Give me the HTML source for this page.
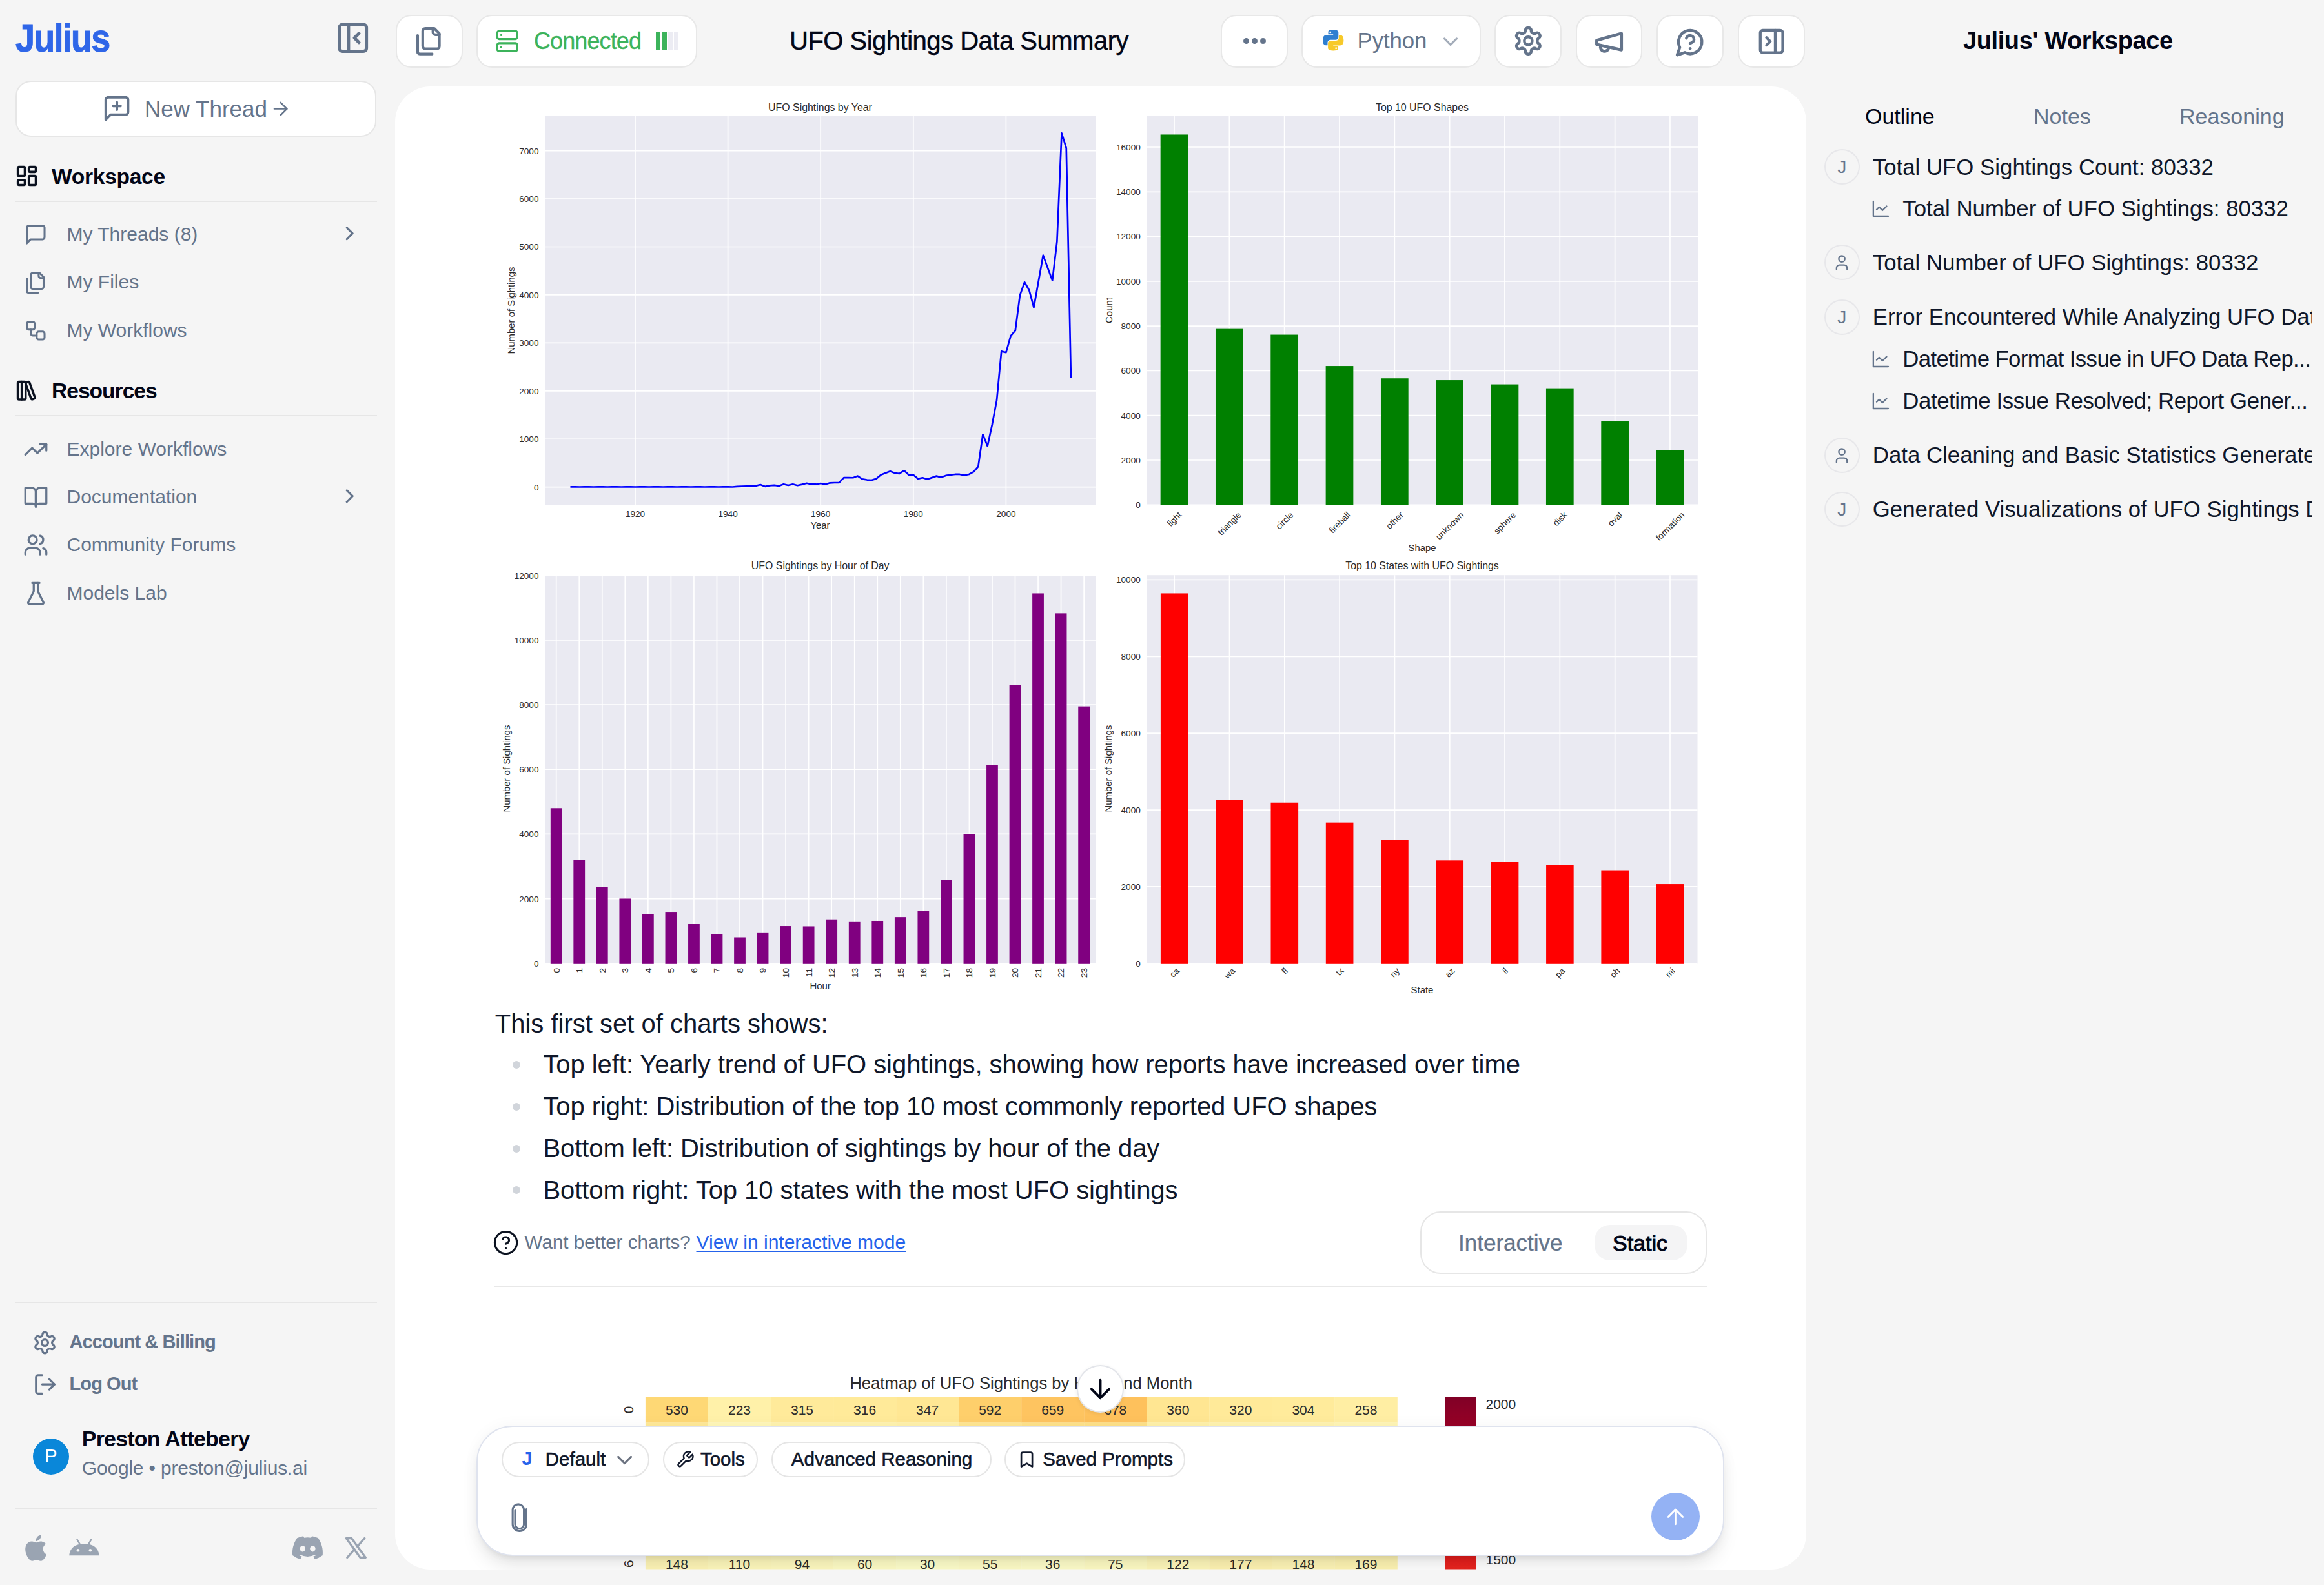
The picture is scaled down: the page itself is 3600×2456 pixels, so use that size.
<!DOCTYPE html><html><head><meta charset="utf-8"><style>
html,body{margin:0;padding:0;width:100%;height:100%;overflow:hidden;background:#f5f5f5}
#root{position:absolute;left:0;top:0;width:1800px;height:1228px;zoom:2;overflow:hidden;font-family:"Liberation Sans",sans-serif;background:#f5f5f5}
.t{position:absolute;white-space:nowrap}
.ic{position:absolute;overflow:visible}
.b{position:absolute;box-sizing:border-box}
@media (max-width:2400px){#root{zoom:1}}
</style></head><body><div id="root"><div class="b" style="left:306.00px;top:67.00px;width:1093.00px;height:1149.00px;background:#fff;border-radius:27.5px;"></div><svg style="position:absolute;left:0;top:0;width:1800px;height:1228px" viewBox="0 0 3600 2456" font-family="Liberation Sans, sans-serif"><defs><clipPath id="cardclip"><rect x="612" y="134" width="2186" height="2297.6" rx="55"/></clipPath></defs><g clip-path="url(#cardclip)"><rect x="844" y="179.2" width="853.50" height="602.80" fill="#eaeaf2"/><line x1="844" x2="1697.5" y1="754.70" y2="754.70" stroke="#fff" stroke-width="1.7"/><line x1="844" x2="1697.5" y1="680.26" y2="680.26" stroke="#fff" stroke-width="1.7"/><line x1="844" x2="1697.5" y1="605.81" y2="605.81" stroke="#fff" stroke-width="1.7"/><line x1="844" x2="1697.5" y1="531.37" y2="531.37" stroke="#fff" stroke-width="1.7"/><line x1="844" x2="1697.5" y1="456.93" y2="456.93" stroke="#fff" stroke-width="1.7"/><line x1="844" x2="1697.5" y1="382.49" y2="382.49" stroke="#fff" stroke-width="1.7"/><line x1="844" x2="1697.5" y1="308.04" y2="308.04" stroke="#fff" stroke-width="1.7"/><line x1="844" x2="1697.5" y1="233.60" y2="233.60" stroke="#fff" stroke-width="1.7"/><line x1="984.00" x2="984.00" y1="179.2" y2="782" stroke="#fff" stroke-width="1.7"/><line x1="1127.60" x2="1127.60" y1="179.2" y2="782" stroke="#fff" stroke-width="1.7"/><line x1="1271.20" x2="1271.20" y1="179.2" y2="782" stroke="#fff" stroke-width="1.7"/><line x1="1414.80" x2="1414.80" y1="179.2" y2="782" stroke="#fff" stroke-width="1.7"/><line x1="1558.40" x2="1558.40" y1="179.2" y2="782" stroke="#fff" stroke-width="1.7"/><text x="834.50" y="759.60" font-size="13.6" fill="#2b2b2b" text-anchor="end">0</text><text x="834.50" y="685.15" font-size="13.6" fill="#2b2b2b" text-anchor="end">1000</text><text x="834.50" y="610.71" font-size="13.6" fill="#2b2b2b" text-anchor="end">2000</text><text x="834.50" y="536.27" font-size="13.6" fill="#2b2b2b" text-anchor="end">3000</text><text x="834.50" y="461.82" font-size="13.6" fill="#2b2b2b" text-anchor="end">4000</text><text x="834.50" y="387.38" font-size="13.6" fill="#2b2b2b" text-anchor="end">5000</text><text x="834.50" y="312.94" font-size="13.6" fill="#2b2b2b" text-anchor="end">6000</text><text x="834.50" y="238.50" font-size="13.6" fill="#2b2b2b" text-anchor="end">7000</text><text x="984.00" y="800.80" font-size="13.6" fill="#2b2b2b" text-anchor="middle">1920</text><text x="1127.60" y="800.80" font-size="13.6" fill="#2b2b2b" text-anchor="middle">1940</text><text x="1271.20" y="800.80" font-size="13.6" fill="#2b2b2b" text-anchor="middle">1960</text><text x="1414.80" y="800.80" font-size="13.6" fill="#2b2b2b" text-anchor="middle">1980</text><text x="1558.40" y="800.80" font-size="13.6" fill="#2b2b2b" text-anchor="middle">2000</text><text x="1270.50" y="172.00" font-size="15.9" fill="#2b2b2b" text-anchor="middle">UFO Sightings by Year</text><text x="1270.50" y="819.00" font-size="14.9" fill="#2b2b2b" text-anchor="middle">Year</text><text x="796.86" y="481.00" font-size="14.9" fill="#2b2b2b" text-anchor="middle" transform="rotate(-90 796.86 481.00)">Number of Sightings</text><polyline points="883.48,754.40 890.66,754.33 897.84,754.48 905.02,754.40 912.20,754.33 919.38,754.48 926.56,754.40 933.74,754.33 940.92,754.48 948.10,754.40 955.28,754.33 962.46,754.48 969.64,754.40 976.82,754.33 984.00,754.48 991.18,754.40 998.36,754.33 1005.54,754.48 1012.72,754.40 1019.90,754.33 1027.08,754.48 1034.26,754.40 1041.44,754.33 1048.62,754.48 1055.80,754.40 1062.98,754.33 1070.16,754.48 1077.34,754.40 1084.52,754.33 1091.70,754.48 1098.88,754.40 1106.06,754.33 1113.24,754.48 1120.42,754.40 1127.60,754.33 1134.78,754.48 1141.96,753.96 1149.14,753.58 1156.32,753.36 1163.50,753.06 1170.68,752.91 1177.86,750.98 1185.04,753.81 1192.22,752.47 1199.40,751.95 1206.58,752.91 1213.76,750.23 1220.94,751.95 1228.12,750.23 1235.30,752.24 1242.48,750.61 1249.66,748.74 1256.84,750.46 1264.02,750.46 1271.20,748.97 1278.38,750.46 1285.56,748.30 1292.74,748.00 1299.92,747.85 1307.10,740.11 1314.28,740.11 1321.46,740.26 1328.64,737.58 1335.82,742.34 1343.00,743.53 1350.18,744.05 1357.36,741.90 1364.54,735.79 1371.72,733.11 1378.90,730.13 1386.08,733.11 1393.26,733.86 1400.44,729.02 1407.62,735.79 1414.80,735.79 1421.98,741.90 1429.16,740.26 1436.34,742.57 1443.52,740.11 1450.70,737.65 1457.88,739.59 1465.06,736.91 1472.24,735.79 1479.42,734.97 1486.60,734.97 1493.78,736.54 1500.96,734.97 1508.14,731.10 1515.32,722.84 1522.50,673.04 1529.68,691.20 1536.86,657.92 1544.04,620.11 1551.22,544.40 1558.40,546.26 1565.58,520.58 1572.76,512.24 1579.94,457.38 1587.12,437.28 1594.30,449.78 1601.48,476.28 1608.66,436.08 1615.84,395.66 1623.02,415.24 1630.20,434.60 1637.38,374.07 1644.56,206.35 1651.74,229.43 1658.92,585.94" fill="none" stroke="#0000ff" stroke-width="2.7" stroke-linejoin="round"/><rect x="1777" y="179" width="853.00" height="603.30" fill="#eaeaf2"/><line x1="1777" x2="2630" y1="782.30" y2="782.30" stroke="#fff" stroke-width="1.7"/><line x1="1777" x2="2630" y1="713.01" y2="713.01" stroke="#fff" stroke-width="1.7"/><line x1="1777" x2="2630" y1="643.72" y2="643.72" stroke="#fff" stroke-width="1.7"/><line x1="1777" x2="2630" y1="574.44" y2="574.44" stroke="#fff" stroke-width="1.7"/><line x1="1777" x2="2630" y1="505.15" y2="505.15" stroke="#fff" stroke-width="1.7"/><line x1="1777" x2="2630" y1="435.86" y2="435.86" stroke="#fff" stroke-width="1.7"/><line x1="1777" x2="2630" y1="366.58" y2="366.58" stroke="#fff" stroke-width="1.7"/><line x1="1777" x2="2630" y1="297.29" y2="297.29" stroke="#fff" stroke-width="1.7"/><line x1="1777" x2="2630" y1="228.00" y2="228.00" stroke="#fff" stroke-width="1.7"/><line x1="1819.00" x2="1819.00" y1="179" y2="782.3" stroke="#fff" stroke-width="1.7"/><line x1="1904.33" x2="1904.33" y1="179" y2="782.3" stroke="#fff" stroke-width="1.7"/><line x1="1989.66" x2="1989.66" y1="179" y2="782.3" stroke="#fff" stroke-width="1.7"/><line x1="2074.99" x2="2074.99" y1="179" y2="782.3" stroke="#fff" stroke-width="1.7"/><line x1="2160.32" x2="2160.32" y1="179" y2="782.3" stroke="#fff" stroke-width="1.7"/><line x1="2245.65" x2="2245.65" y1="179" y2="782.3" stroke="#fff" stroke-width="1.7"/><line x1="2330.98" x2="2330.98" y1="179" y2="782.3" stroke="#fff" stroke-width="1.7"/><line x1="2416.31" x2="2416.31" y1="179" y2="782.3" stroke="#fff" stroke-width="1.7"/><line x1="2501.64" x2="2501.64" y1="179" y2="782.3" stroke="#fff" stroke-width="1.7"/><line x1="2586.97" x2="2586.97" y1="179" y2="782.3" stroke="#fff" stroke-width="1.7"/><rect x="1797.65" y="208.46" width="42.7" height="573.84" fill="#008000"/><rect x="1882.98" y="509.65" width="42.7" height="272.65" fill="#008000"/><rect x="1968.31" y="518.56" width="42.7" height="263.74" fill="#008000"/><rect x="2053.64" y="567.06" width="42.7" height="215.24" fill="#008000"/><rect x="2138.97" y="586.22" width="42.7" height="196.08" fill="#008000"/><rect x="2224.30" y="589.06" width="42.7" height="193.24" fill="#008000"/><rect x="2309.63" y="595.57" width="42.7" height="186.73" fill="#008000"/><rect x="2394.96" y="601.63" width="42.7" height="180.67" fill="#008000"/><rect x="2480.29" y="653.01" width="42.7" height="129.29" fill="#008000"/><rect x="2565.62" y="697.32" width="42.7" height="84.98" fill="#008000"/><text x="1766.80" y="787.20" font-size="13.6" fill="#2b2b2b" text-anchor="end">0</text><text x="1766.80" y="717.91" font-size="13.6" fill="#2b2b2b" text-anchor="end">2000</text><text x="1766.80" y="648.62" font-size="13.6" fill="#2b2b2b" text-anchor="end">4000</text><text x="1766.80" y="579.33" font-size="13.6" fill="#2b2b2b" text-anchor="end">6000</text><text x="1766.80" y="510.05" font-size="13.6" fill="#2b2b2b" text-anchor="end">8000</text><text x="1766.80" y="440.76" font-size="13.6" fill="#2b2b2b" text-anchor="end">10000</text><text x="1766.80" y="371.47" font-size="13.6" fill="#2b2b2b" text-anchor="end">12000</text><text x="1766.80" y="302.18" font-size="13.6" fill="#2b2b2b" text-anchor="end">14000</text><text x="1766.80" y="232.90" font-size="13.6" fill="#2b2b2b" text-anchor="end">16000</text><text x="1819.00" y="809.04" font-size="13.6" fill="#2b2b2b" text-anchor="middle" transform="rotate(-45 1819.00 804.15)">light</text><text x="1904.33" y="815.99" font-size="13.6" fill="#2b2b2b" text-anchor="middle" transform="rotate(-45 1904.33 811.10)">triangle</text><text x="1989.66" y="811.44" font-size="13.6" fill="#2b2b2b" text-anchor="middle" transform="rotate(-45 1989.66 806.55)">circle</text><text x="2074.99" y="814.39" font-size="13.6" fill="#2b2b2b" text-anchor="middle" transform="rotate(-45 2074.99 809.49)">fireball</text><text x="2160.32" y="811.18" font-size="13.6" fill="#2b2b2b" text-anchor="middle" transform="rotate(-45 2160.32 806.29)">other</text><text x="2245.65" y="819.47" font-size="13.6" fill="#2b2b2b" text-anchor="middle" transform="rotate(-45 2245.65 814.58)">unknown</text><text x="2330.98" y="814.93" font-size="13.6" fill="#2b2b2b" text-anchor="middle" transform="rotate(-45 2330.98 810.03)">sphere</text><text x="2416.31" y="808.77" font-size="13.6" fill="#2b2b2b" text-anchor="middle" transform="rotate(-45 2416.31 803.88)">disk</text><text x="2501.64" y="809.04" font-size="13.6" fill="#2b2b2b" text-anchor="middle" transform="rotate(-45 2501.64 804.15)">oval</text><text x="2586.97" y="820.27" font-size="13.6" fill="#2b2b2b" text-anchor="middle" transform="rotate(-45 2586.97 815.37)">formation</text><text x="2203.00" y="172.00" font-size="15.9" fill="#2b2b2b" text-anchor="middle">Top 10 UFO Shapes</text><text x="2203.00" y="853.70" font-size="14.9" fill="#2b2b2b" text-anchor="middle">Shape</text><text x="1723.06" y="481.00" font-size="14.9" fill="#2b2b2b" text-anchor="middle" transform="rotate(-90 1723.06 481.00)">Count</text><rect x="844.2" y="891.2" width="853.40" height="601.60" fill="#eaeaf2"/><line x1="844.2" x2="1697.6" y1="1492.80" y2="1492.80" stroke="#fff" stroke-width="1.7"/><line x1="844.2" x2="1697.6" y1="1392.62" y2="1392.62" stroke="#fff" stroke-width="1.7"/><line x1="844.2" x2="1697.6" y1="1292.43" y2="1292.43" stroke="#fff" stroke-width="1.7"/><line x1="844.2" x2="1697.6" y1="1192.25" y2="1192.25" stroke="#fff" stroke-width="1.7"/><line x1="844.2" x2="1697.6" y1="1092.07" y2="1092.07" stroke="#fff" stroke-width="1.7"/><line x1="844.2" x2="1697.6" y1="991.88" y2="991.88" stroke="#fff" stroke-width="1.7"/><line x1="844.2" x2="1697.6" y1="891.70" y2="891.70" stroke="#fff" stroke-width="1.7"/><line x1="861.70" x2="861.70" y1="891.2" y2="1492.8" stroke="#fff" stroke-width="1.7"/><line x1="897.24" x2="897.24" y1="891.2" y2="1492.8" stroke="#fff" stroke-width="1.7"/><line x1="932.78" x2="932.78" y1="891.2" y2="1492.8" stroke="#fff" stroke-width="1.7"/><line x1="968.32" x2="968.32" y1="891.2" y2="1492.8" stroke="#fff" stroke-width="1.7"/><line x1="1003.86" x2="1003.86" y1="891.2" y2="1492.8" stroke="#fff" stroke-width="1.7"/><line x1="1039.40" x2="1039.40" y1="891.2" y2="1492.8" stroke="#fff" stroke-width="1.7"/><line x1="1074.94" x2="1074.94" y1="891.2" y2="1492.8" stroke="#fff" stroke-width="1.7"/><line x1="1110.48" x2="1110.48" y1="891.2" y2="1492.8" stroke="#fff" stroke-width="1.7"/><line x1="1146.02" x2="1146.02" y1="891.2" y2="1492.8" stroke="#fff" stroke-width="1.7"/><line x1="1181.56" x2="1181.56" y1="891.2" y2="1492.8" stroke="#fff" stroke-width="1.7"/><line x1="1217.10" x2="1217.10" y1="891.2" y2="1492.8" stroke="#fff" stroke-width="1.7"/><line x1="1252.64" x2="1252.64" y1="891.2" y2="1492.8" stroke="#fff" stroke-width="1.7"/><line x1="1288.18" x2="1288.18" y1="891.2" y2="1492.8" stroke="#fff" stroke-width="1.7"/><line x1="1323.72" x2="1323.72" y1="891.2" y2="1492.8" stroke="#fff" stroke-width="1.7"/><line x1="1359.26" x2="1359.26" y1="891.2" y2="1492.8" stroke="#fff" stroke-width="1.7"/><line x1="1394.80" x2="1394.80" y1="891.2" y2="1492.8" stroke="#fff" stroke-width="1.7"/><line x1="1430.34" x2="1430.34" y1="891.2" y2="1492.8" stroke="#fff" stroke-width="1.7"/><line x1="1465.88" x2="1465.88" y1="891.2" y2="1492.8" stroke="#fff" stroke-width="1.7"/><line x1="1501.42" x2="1501.42" y1="891.2" y2="1492.8" stroke="#fff" stroke-width="1.7"/><line x1="1536.96" x2="1536.96" y1="891.2" y2="1492.8" stroke="#fff" stroke-width="1.7"/><line x1="1572.50" x2="1572.50" y1="891.2" y2="1492.8" stroke="#fff" stroke-width="1.7"/><line x1="1608.04" x2="1608.04" y1="891.2" y2="1492.8" stroke="#fff" stroke-width="1.7"/><line x1="1643.58" x2="1643.58" y1="891.2" y2="1492.8" stroke="#fff" stroke-width="1.7"/><line x1="1679.12" x2="1679.12" y1="891.2" y2="1492.8" stroke="#fff" stroke-width="1.7"/><rect x="852.82" y="1252.26" width="17.77" height="240.54" fill="#800080"/><rect x="888.36" y="1332.46" width="17.77" height="160.34" fill="#800080"/><rect x="923.90" y="1374.98" width="17.77" height="117.82" fill="#800080"/><rect x="959.44" y="1392.47" width="17.77" height="100.33" fill="#800080"/><rect x="994.98" y="1416.66" width="17.77" height="76.14" fill="#800080"/><rect x="1030.52" y="1413.05" width="17.77" height="79.75" fill="#800080"/><rect x="1066.06" y="1431.44" width="17.77" height="61.36" fill="#800080"/><rect x="1101.60" y="1447.57" width="17.77" height="45.23" fill="#800080"/><rect x="1137.13" y="1452.48" width="17.77" height="40.32" fill="#800080"/><rect x="1172.67" y="1444.86" width="17.77" height="47.94" fill="#800080"/><rect x="1208.21" y="1435.04" width="17.77" height="57.76" fill="#800080"/><rect x="1243.76" y="1435.45" width="17.77" height="57.35" fill="#800080"/><rect x="1279.30" y="1424.73" width="17.77" height="68.07" fill="#800080"/><rect x="1314.84" y="1427.83" width="17.77" height="64.97" fill="#800080"/><rect x="1350.38" y="1426.98" width="17.77" height="65.82" fill="#800080"/><rect x="1385.92" y="1421.12" width="17.77" height="71.68" fill="#800080"/><rect x="1421.46" y="1411.75" width="17.77" height="81.05" fill="#800080"/><rect x="1457.00" y="1363.36" width="17.77" height="129.44" fill="#800080"/><rect x="1492.54" y="1292.58" width="17.77" height="200.22" fill="#800080"/><rect x="1528.08" y="1185.09" width="17.77" height="307.71" fill="#800080"/><rect x="1563.62" y="1061.01" width="17.77" height="431.79" fill="#800080"/><rect x="1599.15" y="919.45" width="17.77" height="573.35" fill="#800080"/><rect x="1634.69" y="950.36" width="17.77" height="542.44" fill="#800080"/><rect x="1670.23" y="1094.62" width="17.77" height="398.18" fill="#800080"/><text x="834.50" y="1497.70" font-size="13.6" fill="#2b2b2b" text-anchor="end">0</text><text x="834.50" y="1397.51" font-size="13.6" fill="#2b2b2b" text-anchor="end">2000</text><text x="834.50" y="1297.33" font-size="13.6" fill="#2b2b2b" text-anchor="end">4000</text><text x="834.50" y="1197.15" font-size="13.6" fill="#2b2b2b" text-anchor="end">6000</text><text x="834.50" y="1096.96" font-size="13.6" fill="#2b2b2b" text-anchor="end">8000</text><text x="834.50" y="996.78" font-size="13.6" fill="#2b2b2b" text-anchor="end">10000</text><text x="834.50" y="896.60" font-size="13.6" fill="#2b2b2b" text-anchor="end">12000</text><text x="861.70" y="1508.68" font-size="13.6" fill="#2b2b2b" text-anchor="middle" transform="rotate(-90 861.70 1503.78)">0</text><text x="897.24" y="1508.68" font-size="13.6" fill="#2b2b2b" text-anchor="middle" transform="rotate(-90 897.24 1503.78)">1</text><text x="932.78" y="1508.68" font-size="13.6" fill="#2b2b2b" text-anchor="middle" transform="rotate(-90 932.78 1503.78)">2</text><text x="968.32" y="1508.68" font-size="13.6" fill="#2b2b2b" text-anchor="middle" transform="rotate(-90 968.32 1503.78)">3</text><text x="1003.86" y="1508.68" font-size="13.6" fill="#2b2b2b" text-anchor="middle" transform="rotate(-90 1003.86 1503.78)">4</text><text x="1039.40" y="1508.68" font-size="13.6" fill="#2b2b2b" text-anchor="middle" transform="rotate(-90 1039.40 1503.78)">5</text><text x="1074.94" y="1508.68" font-size="13.6" fill="#2b2b2b" text-anchor="middle" transform="rotate(-90 1074.94 1503.78)">6</text><text x="1110.48" y="1508.68" font-size="13.6" fill="#2b2b2b" text-anchor="middle" transform="rotate(-90 1110.48 1503.78)">7</text><text x="1146.02" y="1508.68" font-size="13.6" fill="#2b2b2b" text-anchor="middle" transform="rotate(-90 1146.02 1503.78)">8</text><text x="1181.56" y="1508.68" font-size="13.6" fill="#2b2b2b" text-anchor="middle" transform="rotate(-90 1181.56 1503.78)">9</text><text x="1217.10" y="1512.46" font-size="13.6" fill="#2b2b2b" text-anchor="middle" transform="rotate(-90 1217.10 1507.56)">10</text><text x="1252.64" y="1511.96" font-size="13.6" fill="#2b2b2b" text-anchor="middle" transform="rotate(-90 1252.64 1507.06)">11</text><text x="1288.18" y="1512.46" font-size="13.6" fill="#2b2b2b" text-anchor="middle" transform="rotate(-90 1288.18 1507.56)">12</text><text x="1323.72" y="1512.46" font-size="13.6" fill="#2b2b2b" text-anchor="middle" transform="rotate(-90 1323.72 1507.56)">13</text><text x="1359.26" y="1512.46" font-size="13.6" fill="#2b2b2b" text-anchor="middle" transform="rotate(-90 1359.26 1507.56)">14</text><text x="1394.80" y="1512.46" font-size="13.6" fill="#2b2b2b" text-anchor="middle" transform="rotate(-90 1394.80 1507.56)">15</text><text x="1430.34" y="1512.46" font-size="13.6" fill="#2b2b2b" text-anchor="middle" transform="rotate(-90 1430.34 1507.56)">16</text><text x="1465.88" y="1512.46" font-size="13.6" fill="#2b2b2b" text-anchor="middle" transform="rotate(-90 1465.88 1507.56)">17</text><text x="1501.42" y="1512.46" font-size="13.6" fill="#2b2b2b" text-anchor="middle" transform="rotate(-90 1501.42 1507.56)">18</text><text x="1536.96" y="1512.46" font-size="13.6" fill="#2b2b2b" text-anchor="middle" transform="rotate(-90 1536.96 1507.56)">19</text><text x="1572.50" y="1512.46" font-size="13.6" fill="#2b2b2b" text-anchor="middle" transform="rotate(-90 1572.50 1507.56)">20</text><text x="1608.04" y="1512.46" font-size="13.6" fill="#2b2b2b" text-anchor="middle" transform="rotate(-90 1608.04 1507.56)">21</text><text x="1643.58" y="1512.46" font-size="13.6" fill="#2b2b2b" text-anchor="middle" transform="rotate(-90 1643.58 1507.56)">22</text><text x="1679.12" y="1512.46" font-size="13.6" fill="#2b2b2b" text-anchor="middle" transform="rotate(-90 1679.12 1507.56)">23</text><text x="1270.70" y="882.30" font-size="15.9" fill="#2b2b2b" text-anchor="middle">UFO Sightings by Hour of Day</text><text x="1270.70" y="1533.00" font-size="14.9" fill="#2b2b2b" text-anchor="middle">Hour</text><text x="789.96" y="1191.00" font-size="14.9" fill="#2b2b2b" text-anchor="middle" transform="rotate(-90 789.96 1191.00)">Number of Sightings</text><rect x="1776.2" y="891.2" width="853.30" height="601.60" fill="#eaeaf2"/><line x1="1776.2" x2="2629.5" y1="1492.80" y2="1492.80" stroke="#fff" stroke-width="1.7"/><line x1="1776.2" x2="2629.5" y1="1373.92" y2="1373.92" stroke="#fff" stroke-width="1.7"/><line x1="1776.2" x2="2629.5" y1="1255.04" y2="1255.04" stroke="#fff" stroke-width="1.7"/><line x1="1776.2" x2="2629.5" y1="1136.16" y2="1136.16" stroke="#fff" stroke-width="1.7"/><line x1="1776.2" x2="2629.5" y1="1017.28" y2="1017.28" stroke="#fff" stroke-width="1.7"/><line x1="1776.2" x2="2629.5" y1="898.40" y2="898.40" stroke="#fff" stroke-width="1.7"/><line x1="1819.20" x2="1819.20" y1="891.2" y2="1492.8" stroke="#fff" stroke-width="1.7"/><line x1="1904.51" x2="1904.51" y1="891.2" y2="1492.8" stroke="#fff" stroke-width="1.7"/><line x1="1989.82" x2="1989.82" y1="891.2" y2="1492.8" stroke="#fff" stroke-width="1.7"/><line x1="2075.13" x2="2075.13" y1="891.2" y2="1492.8" stroke="#fff" stroke-width="1.7"/><line x1="2160.44" x2="2160.44" y1="891.2" y2="1492.8" stroke="#fff" stroke-width="1.7"/><line x1="2245.75" x2="2245.75" y1="891.2" y2="1492.8" stroke="#fff" stroke-width="1.7"/><line x1="2331.06" x2="2331.06" y1="891.2" y2="1492.8" stroke="#fff" stroke-width="1.7"/><line x1="2416.37" x2="2416.37" y1="891.2" y2="1492.8" stroke="#fff" stroke-width="1.7"/><line x1="2501.68" x2="2501.68" y1="891.2" y2="1492.8" stroke="#fff" stroke-width="1.7"/><line x1="2586.99" x2="2586.99" y1="891.2" y2="1492.8" stroke="#fff" stroke-width="1.7"/><rect x="1797.90" y="919.44" width="42.6" height="573.36" fill="#ff0000"/><rect x="1883.21" y="1239.70" width="42.6" height="253.10" fill="#ff0000"/><rect x="1968.52" y="1243.75" width="42.6" height="249.05" fill="#ff0000"/><rect x="2053.83" y="1274.66" width="42.6" height="218.14" fill="#ff0000"/><rect x="2139.14" y="1302.00" width="42.6" height="190.80" fill="#ff0000"/><rect x="2224.45" y="1333.32" width="42.6" height="159.48" fill="#ff0000"/><rect x="2309.76" y="1336.00" width="42.6" height="156.80" fill="#ff0000"/><rect x="2395.07" y="1340.04" width="42.6" height="152.76" fill="#ff0000"/><rect x="2480.38" y="1348.54" width="42.6" height="144.26" fill="#ff0000"/><rect x="2565.69" y="1370.06" width="42.6" height="122.74" fill="#ff0000"/><text x="1766.80" y="1497.70" font-size="13.6" fill="#2b2b2b" text-anchor="end">0</text><text x="1766.80" y="1378.82" font-size="13.6" fill="#2b2b2b" text-anchor="end">2000</text><text x="1766.80" y="1259.94" font-size="13.6" fill="#2b2b2b" text-anchor="end">4000</text><text x="1766.80" y="1141.06" font-size="13.6" fill="#2b2b2b" text-anchor="end">6000</text><text x="1766.80" y="1022.18" font-size="13.6" fill="#2b2b2b" text-anchor="end">8000</text><text x="1766.80" y="903.30" font-size="13.6" fill="#2b2b2b" text-anchor="end">10000</text><text x="1819.20" y="1511.80" font-size="13.6" fill="#2b2b2b" text-anchor="middle" transform="rotate(-45 1819.20 1506.91)">ca</text><text x="1904.51" y="1512.87" font-size="13.6" fill="#2b2b2b" text-anchor="middle" transform="rotate(-45 1904.51 1507.97)">wa</text><text x="1989.82" y="1509.13" font-size="13.6" fill="#2b2b2b" text-anchor="middle" transform="rotate(-45 1989.82 1504.23)">fl</text><text x="2075.13" y="1510.46" font-size="13.6" fill="#2b2b2b" text-anchor="middle" transform="rotate(-45 2075.13 1505.57)">tx</text><text x="2160.44" y="1511.80" font-size="13.6" fill="#2b2b2b" text-anchor="middle" transform="rotate(-45 2160.44 1506.91)">ny</text><text x="2245.75" y="1511.80" font-size="13.6" fill="#2b2b2b" text-anchor="middle" transform="rotate(-45 2245.75 1506.91)">az</text><text x="2331.06" y="1508.86" font-size="13.6" fill="#2b2b2b" text-anchor="middle" transform="rotate(-45 2331.06 1503.96)">il</text><text x="2416.37" y="1512.07" font-size="13.6" fill="#2b2b2b" text-anchor="middle" transform="rotate(-45 2416.37 1507.18)">pa</text><text x="2501.68" y="1512.07" font-size="13.6" fill="#2b2b2b" text-anchor="middle" transform="rotate(-45 2501.68 1507.18)">oh</text><text x="2586.99" y="1511.80" font-size="13.6" fill="#2b2b2b" text-anchor="middle" transform="rotate(-45 2586.99 1506.90)">mi</text><text x="2203.00" y="882.30" font-size="15.9" fill="#2b2b2b" text-anchor="middle">Top 10 States with UFO Sightings</text><text x="2203.00" y="1539.00" font-size="14.9" fill="#2b2b2b" text-anchor="middle">State</text><text x="1722.36" y="1191.00" font-size="14.9" fill="#2b2b2b" text-anchor="middle" transform="rotate(-90 1722.36 1191.00)">Number of Sightings</text><text x="1581.70" y="2151.60" font-size="25.6" fill="#2b2b2b" text-anchor="middle">Heatmap of UFO Sightings by Hour and Month</text><rect x="999.90" y="2164.50" width="97.35" height="40.10" fill="#fed875"/><text x="1048.42" y="2191.96" font-size="21" fill="#2b2b2b" text-anchor="middle">530</text><rect x="1096.95" y="2164.50" width="97.35" height="40.10" fill="#fff1a9"/><text x="1145.48" y="2191.96" font-size="21" fill="#2b2b2b" text-anchor="middle">223</text><rect x="1194.00" y="2164.50" width="97.35" height="40.10" fill="#ffea9a"/><text x="1242.53" y="2191.96" font-size="21" fill="#2b2b2b" text-anchor="middle">315</text><rect x="1291.05" y="2164.50" width="97.35" height="40.10" fill="#ffea99"/><text x="1339.58" y="2191.96" font-size="21" fill="#2b2b2b" text-anchor="middle">316</text><rect x="1388.10" y="2164.50" width="97.35" height="40.10" fill="#ffe794"/><text x="1436.62" y="2191.96" font-size="21" fill="#2b2b2b" text-anchor="middle">347</text><rect x="1485.15" y="2164.50" width="97.35" height="40.10" fill="#fecf6b"/><text x="1533.68" y="2191.96" font-size="21" fill="#2b2b2b" text-anchor="middle">592</text><rect x="1582.20" y="2164.50" width="97.35" height="40.10" fill="#fec460"/><text x="1630.72" y="2191.96" font-size="21" fill="#2b2b2b" text-anchor="middle">659</text><rect x="1679.25" y="2164.50" width="97.35" height="40.10" fill="#fec15c"/><text x="1727.78" y="2191.96" font-size="21" fill="#2b2b2b" text-anchor="middle">678</text><rect x="1776.30" y="2164.50" width="97.35" height="40.10" fill="#ffe692"/><text x="1824.83" y="2191.96" font-size="21" fill="#2b2b2b" text-anchor="middle">360</text><rect x="1873.35" y="2164.50" width="97.35" height="40.10" fill="#ffea99"/><text x="1921.88" y="2191.96" font-size="21" fill="#2b2b2b" text-anchor="middle">320</text><rect x="1970.40" y="2164.50" width="97.35" height="40.10" fill="#ffeb9b"/><text x="2018.93" y="2191.96" font-size="21" fill="#2b2b2b" text-anchor="middle">304</text><rect x="2067.45" y="2164.50" width="97.35" height="40.10" fill="#ffeea3"/><text x="2115.97" y="2191.96" font-size="21" fill="#2b2b2b" text-anchor="middle">258</text><text x="980.56" y="2184.40" font-size="21" fill="#2b2b2b" text-anchor="middle" transform="rotate(-90 980.56 2184.40)">0</text><rect x="999.90" y="2204.30" width="97.35" height="40.10" fill="#ffe997"/><text x="1048.42" y="2231.76" font-size="21" fill="#2b2b2b" text-anchor="middle">329</text><rect x="1096.95" y="2204.30" width="97.35" height="40.10" fill="#fff7b8"/><text x="1145.48" y="2231.76" font-size="21" fill="#2b2b2b" text-anchor="middle">138</text><rect x="1194.00" y="2204.30" width="97.35" height="40.10" fill="#fff3ae"/><text x="1242.53" y="2231.76" font-size="21" fill="#2b2b2b" text-anchor="middle">195</text><rect x="1291.05" y="2204.30" width="97.35" height="40.10" fill="#fff3ae"/><text x="1339.58" y="2231.76" font-size="21" fill="#2b2b2b" text-anchor="middle">196</text><rect x="1388.10" y="2204.30" width="97.35" height="40.10" fill="#fff1ab"/><text x="1436.62" y="2231.76" font-size="21" fill="#2b2b2b" text-anchor="middle">215</text><rect x="1485.15" y="2204.30" width="97.35" height="40.10" fill="#ffe691"/><text x="1533.68" y="2231.76" font-size="21" fill="#2b2b2b" text-anchor="middle">367</text><rect x="1582.20" y="2204.30" width="97.35" height="40.10" fill="#fee28a"/><text x="1630.72" y="2231.76" font-size="21" fill="#2b2b2b" text-anchor="middle">409</text><rect x="1679.25" y="2204.30" width="97.35" height="40.10" fill="#fee188"/><text x="1727.78" y="2231.76" font-size="21" fill="#2b2b2b" text-anchor="middle">420</text><rect x="1776.30" y="2204.30" width="97.35" height="40.10" fill="#fff1a9"/><text x="1824.83" y="2231.76" font-size="21" fill="#2b2b2b" text-anchor="middle">223</text><rect x="1873.35" y="2204.30" width="97.35" height="40.10" fill="#fff3ae"/><text x="1921.88" y="2231.76" font-size="21" fill="#2b2b2b" text-anchor="middle">198</text><rect x="1970.40" y="2204.30" width="97.35" height="40.10" fill="#fff3b0"/><text x="2018.93" y="2231.76" font-size="21" fill="#2b2b2b" text-anchor="middle">188</text><rect x="2067.45" y="2204.30" width="97.35" height="40.10" fill="#fff5b5"/><text x="2115.97" y="2231.76" font-size="21" fill="#2b2b2b" text-anchor="middle">160</text><text x="980.56" y="2224.20" font-size="21" fill="#2b2b2b" text-anchor="middle" transform="rotate(-90 980.56 2224.20)">1</text><rect x="999.90" y="2244.10" width="97.35" height="40.10" fill="#fff0a7"/><text x="1048.42" y="2271.56" font-size="21" fill="#2b2b2b" text-anchor="middle">238</text><rect x="1096.95" y="2244.10" width="97.35" height="40.10" fill="#fffabf"/><text x="1145.48" y="2271.56" font-size="21" fill="#2b2b2b" text-anchor="middle">100</text><rect x="1194.00" y="2244.10" width="97.35" height="40.10" fill="#fff7b8"/><text x="1242.53" y="2271.56" font-size="21" fill="#2b2b2b" text-anchor="middle">142</text><rect x="1291.05" y="2244.10" width="97.35" height="40.10" fill="#fff7b8"/><text x="1339.58" y="2271.56" font-size="21" fill="#2b2b2b" text-anchor="middle">142</text><rect x="1388.10" y="2244.10" width="97.35" height="40.10" fill="#fff6b5"/><text x="1436.62" y="2271.56" font-size="21" fill="#2b2b2b" text-anchor="middle">156</text><rect x="1485.15" y="2244.10" width="97.35" height="40.10" fill="#ffeea2"/><text x="1533.68" y="2271.56" font-size="21" fill="#2b2b2b" text-anchor="middle">266</text><rect x="1582.20" y="2244.10" width="97.35" height="40.10" fill="#ffeb9d"/><text x="1630.72" y="2271.56" font-size="21" fill="#2b2b2b" text-anchor="middle">297</text><rect x="1679.25" y="2244.10" width="97.35" height="40.10" fill="#ffeb9b"/><text x="1727.78" y="2271.56" font-size="21" fill="#2b2b2b" text-anchor="middle">305</text><rect x="1776.30" y="2244.10" width="97.35" height="40.10" fill="#fff5b4"/><text x="1824.83" y="2271.56" font-size="21" fill="#2b2b2b" text-anchor="middle">162</text><rect x="1873.35" y="2244.10" width="97.35" height="40.10" fill="#fff7b7"/><text x="1921.88" y="2271.56" font-size="21" fill="#2b2b2b" text-anchor="middle">144</text><rect x="1970.40" y="2244.10" width="97.35" height="40.10" fill="#fff7b9"/><text x="2018.93" y="2271.56" font-size="21" fill="#2b2b2b" text-anchor="middle">137</text><rect x="2067.45" y="2244.10" width="97.35" height="40.10" fill="#fff9bc"/><text x="2115.97" y="2271.56" font-size="21" fill="#2b2b2b" text-anchor="middle">116</text><text x="980.56" y="2264.00" font-size="21" fill="#2b2b2b" text-anchor="middle" transform="rotate(-90 980.56 2264.00)">2</text><rect x="999.90" y="2283.90" width="97.35" height="40.10" fill="#fff2ad"/><text x="1048.42" y="2311.36" font-size="21" fill="#2b2b2b" text-anchor="middle">201</text><rect x="1096.95" y="2283.90" width="97.35" height="40.10" fill="#fffbc2"/><text x="1145.48" y="2311.36" font-size="21" fill="#2b2b2b" text-anchor="middle">85</text><rect x="1194.00" y="2283.90" width="97.35" height="40.10" fill="#fff8bc"/><text x="1242.53" y="2311.36" font-size="21" fill="#2b2b2b" text-anchor="middle">120</text><rect x="1291.05" y="2283.90" width="97.35" height="40.10" fill="#fff8bc"/><text x="1339.58" y="2311.36" font-size="21" fill="#2b2b2b" text-anchor="middle">120</text><rect x="1388.10" y="2283.90" width="97.35" height="40.10" fill="#fff7b9"/><text x="1436.62" y="2311.36" font-size="21" fill="#2b2b2b" text-anchor="middle">132</text><rect x="1485.15" y="2283.90" width="97.35" height="40.10" fill="#fff1a9"/><text x="1533.68" y="2311.36" font-size="21" fill="#2b2b2b" text-anchor="middle">225</text><rect x="1582.20" y="2283.90" width="97.35" height="40.10" fill="#ffefa5"/><text x="1630.72" y="2311.36" font-size="21" fill="#2b2b2b" text-anchor="middle">250</text><rect x="1679.25" y="2283.90" width="97.35" height="40.10" fill="#ffeea3"/><text x="1727.78" y="2311.36" font-size="21" fill="#2b2b2b" text-anchor="middle">258</text><rect x="1776.30" y="2283.90" width="97.35" height="40.10" fill="#fff7b9"/><text x="1824.83" y="2311.36" font-size="21" fill="#2b2b2b" text-anchor="middle">137</text><rect x="1873.35" y="2283.90" width="97.35" height="40.10" fill="#fff8bb"/><text x="1921.88" y="2311.36" font-size="21" fill="#2b2b2b" text-anchor="middle">122</text><rect x="1970.40" y="2283.90" width="97.35" height="40.10" fill="#fff9bc"/><text x="2018.93" y="2311.36" font-size="21" fill="#2b2b2b" text-anchor="middle">116</text><rect x="2067.45" y="2283.90" width="97.35" height="40.10" fill="#fffabf"/><text x="2115.97" y="2311.36" font-size="21" fill="#2b2b2b" text-anchor="middle">98</text><text x="980.56" y="2303.80" font-size="21" fill="#2b2b2b" text-anchor="middle" transform="rotate(-90 980.56 2303.80)">3</text><rect x="999.90" y="2323.70" width="97.35" height="40.10" fill="#fff5b5"/><text x="1048.42" y="2351.16" font-size="21" fill="#2b2b2b" text-anchor="middle">159</text><rect x="1096.95" y="2323.70" width="97.35" height="40.10" fill="#fffcc5"/><text x="1145.48" y="2351.16" font-size="21" fill="#2b2b2b" text-anchor="middle">67</text><rect x="1194.00" y="2323.70" width="97.35" height="40.10" fill="#fffac0"/><text x="1242.53" y="2351.16" font-size="21" fill="#2b2b2b" text-anchor="middle">94</text><rect x="1291.05" y="2323.70" width="97.35" height="40.10" fill="#fffac0"/><text x="1339.58" y="2351.16" font-size="21" fill="#2b2b2b" text-anchor="middle">95</text><rect x="1388.10" y="2323.70" width="97.35" height="40.10" fill="#fff9be"/><text x="1436.62" y="2351.16" font-size="21" fill="#2b2b2b" text-anchor="middle">104</text><rect x="1485.15" y="2323.70" width="97.35" height="40.10" fill="#fff4b1"/><text x="1533.68" y="2351.16" font-size="21" fill="#2b2b2b" text-anchor="middle">178</text><rect x="1582.20" y="2323.70" width="97.35" height="40.10" fill="#fff3ae"/><text x="1630.72" y="2351.16" font-size="21" fill="#2b2b2b" text-anchor="middle">198</text><rect x="1679.25" y="2323.70" width="97.35" height="40.10" fill="#fff2ad"/><text x="1727.78" y="2351.16" font-size="21" fill="#2b2b2b" text-anchor="middle">203</text><rect x="1776.30" y="2323.70" width="97.35" height="40.10" fill="#fff9be"/><text x="1824.83" y="2351.16" font-size="21" fill="#2b2b2b" text-anchor="middle">108</text><rect x="1873.35" y="2323.70" width="97.35" height="40.10" fill="#fffac0"/><text x="1921.88" y="2351.16" font-size="21" fill="#2b2b2b" text-anchor="middle">96</text><rect x="1970.40" y="2323.70" width="97.35" height="40.10" fill="#fffac1"/><text x="2018.93" y="2351.16" font-size="21" fill="#2b2b2b" text-anchor="middle">91</text><rect x="2067.45" y="2323.70" width="97.35" height="40.10" fill="#fffbc3"/><text x="2115.97" y="2351.16" font-size="21" fill="#2b2b2b" text-anchor="middle">77</text><text x="980.56" y="2343.60" font-size="21" fill="#2b2b2b" text-anchor="middle" transform="rotate(-90 980.56 2343.60)">4</text><rect x="999.90" y="2363.50" width="97.35" height="40.10" fill="#fff5b5"/><text x="1048.42" y="2390.96" font-size="21" fill="#2b2b2b" text-anchor="middle">159</text><rect x="1096.95" y="2363.50" width="97.35" height="40.10" fill="#fffcc5"/><text x="1145.48" y="2390.96" font-size="21" fill="#2b2b2b" text-anchor="middle">67</text><rect x="1194.00" y="2363.50" width="97.35" height="40.10" fill="#fffac0"/><text x="1242.53" y="2390.96" font-size="21" fill="#2b2b2b" text-anchor="middle">94</text><rect x="1291.05" y="2363.50" width="97.35" height="40.10" fill="#fffac0"/><text x="1339.58" y="2390.96" font-size="21" fill="#2b2b2b" text-anchor="middle">95</text><rect x="1388.10" y="2363.50" width="97.35" height="40.10" fill="#fff9be"/><text x="1436.62" y="2390.96" font-size="21" fill="#2b2b2b" text-anchor="middle">104</text><rect x="1485.15" y="2363.50" width="97.35" height="40.10" fill="#fff4b1"/><text x="1533.68" y="2390.96" font-size="21" fill="#2b2b2b" text-anchor="middle">178</text><rect x="1582.20" y="2363.50" width="97.35" height="40.10" fill="#fff3ae"/><text x="1630.72" y="2390.96" font-size="21" fill="#2b2b2b" text-anchor="middle">198</text><rect x="1679.25" y="2363.50" width="97.35" height="40.10" fill="#fff2ad"/><text x="1727.78" y="2390.96" font-size="21" fill="#2b2b2b" text-anchor="middle">203</text><rect x="1776.30" y="2363.50" width="97.35" height="40.10" fill="#fff9be"/><text x="1824.83" y="2390.96" font-size="21" fill="#2b2b2b" text-anchor="middle">108</text><rect x="1873.35" y="2363.50" width="97.35" height="40.10" fill="#fffac0"/><text x="1921.88" y="2390.96" font-size="21" fill="#2b2b2b" text-anchor="middle">96</text><rect x="1970.40" y="2363.50" width="97.35" height="40.10" fill="#fffac1"/><text x="2018.93" y="2390.96" font-size="21" fill="#2b2b2b" text-anchor="middle">91</text><rect x="2067.45" y="2363.50" width="97.35" height="40.10" fill="#fffbc3"/><text x="2115.97" y="2390.96" font-size="21" fill="#2b2b2b" text-anchor="middle">77</text><text x="980.56" y="2383.40" font-size="21" fill="#2b2b2b" text-anchor="middle" transform="rotate(-90 980.56 2383.40)">5</text><rect x="999.90" y="2403.30" width="97.35" height="40.10" fill="#fff6b7"/><text x="1048.42" y="2430.76" font-size="21" fill="#2b2b2b" text-anchor="middle">148</text><rect x="1096.95" y="2403.30" width="97.35" height="40.10" fill="#fff9bd"/><text x="1145.48" y="2430.76" font-size="21" fill="#2b2b2b" text-anchor="middle">110</text><rect x="1194.00" y="2403.30" width="97.35" height="40.10" fill="#fffac0"/><text x="1242.53" y="2430.76" font-size="21" fill="#2b2b2b" text-anchor="middle">94</text><rect x="1291.05" y="2403.30" width="97.35" height="40.10" fill="#fffdc6"/><text x="1339.58" y="2430.76" font-size="21" fill="#2b2b2b" text-anchor="middle">60</text><rect x="1388.10" y="2403.30" width="97.35" height="40.10" fill="#ffffcb"/><text x="1436.62" y="2430.76" font-size="21" fill="#2b2b2b" text-anchor="middle">30</text><rect x="1485.15" y="2403.30" width="97.35" height="40.10" fill="#fffdc7"/><text x="1533.68" y="2430.76" font-size="21" fill="#2b2b2b" text-anchor="middle">55</text><rect x="1582.20" y="2403.30" width="97.35" height="40.10" fill="#fffeca"/><text x="1630.72" y="2430.76" font-size="21" fill="#2b2b2b" text-anchor="middle">36</text><rect x="1679.25" y="2403.30" width="97.35" height="40.10" fill="#fffcc4"/><text x="1727.78" y="2430.76" font-size="21" fill="#2b2b2b" text-anchor="middle">75</text><rect x="1776.30" y="2403.30" width="97.35" height="40.10" fill="#fff8bb"/><text x="1824.83" y="2430.76" font-size="21" fill="#2b2b2b" text-anchor="middle">122</text><rect x="1873.35" y="2403.30" width="97.35" height="40.10" fill="#fff4b2"/><text x="1921.88" y="2430.76" font-size="21" fill="#2b2b2b" text-anchor="middle">177</text><rect x="1970.40" y="2403.30" width="97.35" height="40.10" fill="#fff6b7"/><text x="2018.93" y="2430.76" font-size="21" fill="#2b2b2b" text-anchor="middle">148</text><rect x="2067.45" y="2403.30" width="97.35" height="40.10" fill="#fff5b3"/><text x="2115.97" y="2430.76" font-size="21" fill="#2b2b2b" text-anchor="middle">169</text><text x="980.56" y="2423.20" font-size="21" fill="#2b2b2b" text-anchor="middle" transform="rotate(-90 980.56 2423.20)">6</text><defs><linearGradient id="cb" x1="0" y1="0" x2="0" y2="1"><stop offset="0.000" stop-color="rgb(128, 0, 38)"/><stop offset="0.125" stop-color="rgb(189, 0, 38)"/><stop offset="0.250" stop-color="rgb(227, 26, 28)"/><stop offset="0.375" stop-color="rgb(252, 78, 42)"/><stop offset="0.500" stop-color="rgb(253, 141, 60)"/><stop offset="0.625" stop-color="rgb(254, 178, 76)"/><stop offset="0.750" stop-color="rgb(254, 217, 118)"/><stop offset="0.875" stop-color="rgb(255, 237, 160)"/><stop offset="1.000" stop-color="rgb(255, 255, 204)"/></linearGradient></defs><rect x="2238" y="2164" width="48" height="962" fill="url(#cb)"/><text x="2301.50" y="2182.56" font-size="21" fill="#2b2b2b" text-anchor="start">2000</text><text x="2301.50" y="2423.56" font-size="21" fill="#2b2b2b" text-anchor="start">1500</text></g></svg><div class="t" style="left:383.40px;top:782.85px;font-size:20px;line-height:20px;color:#0f172a;">This first set of charts shows:</div><div class="b" style="left:397.00px;top:821.85px;width:6.00px;height:6.00px;background:#d1d5db;border-radius:50%;"></div><div class="t" style="left:420.70px;top:814.40px;font-size:20px;line-height:20px;color:#0f172a;letter-spacing:-0.03px;">Top left: Yearly trend of UFO sightings, showing how reports have increased over time</div><div class="b" style="left:397.00px;top:854.30px;width:6.00px;height:6.00px;background:#d1d5db;border-radius:50%;"></div><div class="t" style="left:420.70px;top:846.85px;font-size:20px;line-height:20px;color:#0f172a;letter-spacing:-0.03px;">Top right: Distribution of the top 10 most commonly reported UFO shapes</div><div class="b" style="left:397.00px;top:886.75px;width:6.00px;height:6.00px;background:#d1d5db;border-radius:50%;"></div><div class="t" style="left:420.70px;top:879.30px;font-size:20px;line-height:20px;color:#0f172a;letter-spacing:-0.03px;">Bottom left: Distribution of sightings by hour of the day</div><div class="b" style="left:397.00px;top:919.20px;width:6.00px;height:6.00px;background:#d1d5db;border-radius:50%;"></div><div class="t" style="left:420.70px;top:911.75px;font-size:20px;line-height:20px;color:#0f172a;letter-spacing:-0.03px;">Bottom right: Top 10 states with the most UFO sightings</div><svg class="ic" style="left:381.35px;top:952.43px;width:20.55px;height:20.55px;" viewBox="0 0 24 24" fill="none" stroke="#0b1220" stroke-width="1.8" stroke-linecap="round" stroke-linejoin="round"><circle cx="12" cy="12" r="10"/><path d="M9.09 9a3 3 0 0 1 5.83 1c0 2-3 3-3 3"/><path d="M12 17h.01"/></svg><div class="t" style="left:406.30px;top:955.02px;font-size:14.8px;line-height:14.8px;color:#64748b;">Want better charts?</div><div class="t" style="left:539.25px;top:954.85px;font-size:15px;line-height:15px;color:#2563eb;text-decoration:underline;text-decoration-thickness:1px;text-underline-offset:1.5px;">View in interactive mode</div><div class="b" style="left:1100.15px;top:938.65px;width:221.70px;height:48.35px;border:1px solid #e6e6e6;border-radius:16px;background:#fff;"></div><div class="b" style="left:1235.00px;top:948.90px;width:71.90px;height:27.60px;background:#f4f4f5;border-radius:12px;"></div><div class="t" style="left:1129.50px;top:954.02px;font-size:17.5px;line-height:17.5px;color:#64748b;-webkit-text-stroke:0.15px currentColor;">Interactive</div><div class="t" style="left:1249.00px;top:954.45px;font-size:17px;line-height:17px;color:#020617;-webkit-text-stroke:0.55px currentColor;">Static</div><div class="b" style="left:382.50px;top:996.50px;width:939.50px;height:1.00px;background:#e8e8e8;"></div><div class="b" style="left:369.00px;top:1104.50px;width:966.50px;height:101.00px;background:#fff;border:1px solid #dfe3ee;border-radius:28px;box-shadow:0 10px 15px -3px rgba(0,0,0,0.1),0 4px 6px -4px rgba(0,0,0,0.1),0 0 12px rgba(0,0,0,0.04);clip-path:inset(-40px -40px -10.6px -40px);"></div><div class="b" style="left:388.70px;top:1117.20px;width:114.55px;height:27.45px;border:1px solid #e5e5e5;border-radius:14px;background:#fff;"></div><div class="t" style="left:404.30px;top:1123.17px;font-size:14.5px;line-height:14.5px;color:#2563eb;font-weight:700;">J</div><div class="t" style="left:422.40px;top:1122.96px;font-size:14.75px;line-height:14.75px;color:#0f172a;-webkit-text-stroke:0.3px currentColor;">Default</div><svg class="ic" style="left:478px;top:1127.3px;width:11.6px;height:7px" viewBox="5 8 14 7.5" fill="none" stroke="#6b7280" stroke-width="2" stroke-linecap="round" stroke-linejoin="round"><path d="m6 9 6 6 6-6"/></svg><div class="b" style="left:513.25px;top:1117.20px;width:73.60px;height:27.45px;border:1px solid #e5e5e5;border-radius:14px;background:#fff;"></div><svg class="ic" style="left:523.30px;top:1123.30px;width:14.40px;height:14.40px;" viewBox="0 0 24 24" fill="none" stroke="#0f172a" stroke-width="2" stroke-linecap="round" stroke-linejoin="round"><path d="M14.7 6.3a1 1 0 0 0 0 1.4l1.6 1.6a1 1 0 0 0 1.4 0l3.77-3.77a6 6 0 0 1-7.94 7.94l-6.91 6.91a2.12 2.12 0 0 1-3-3l6.91-6.91a6 6 0 0 1 7.94-7.94l-3.76 3.76z"/></svg><div class="t" style="left:542.45px;top:1122.96px;font-size:14.75px;line-height:14.75px;color:#0f172a;-webkit-text-stroke:0.3px currentColor;">Tools</div><div class="b" style="left:597.45px;top:1117.20px;width:170.70px;height:27.45px;border:1px solid #e5e5e5;border-radius:14px;background:#fff;"></div><div class="t" style="left:612.90px;top:1122.96px;font-size:14.75px;line-height:14.75px;color:#0f172a;-webkit-text-stroke:0.3px currentColor;">Advanced Reasoning</div><div class="b" style="left:778.20px;top:1117.20px;width:139.80px;height:27.45px;border:1px solid #e5e5e5;border-radius:14px;background:#fff;"></div><svg class="ic" style="left:787.90px;top:1123.45px;width:14.60px;height:14.60px;" viewBox="0 0 24 24" fill="none" stroke="#0f172a" stroke-width="2.2" stroke-linecap="round" stroke-linejoin="round"><path d="m19 21-7-4-7 4V5a2 2 0 0 1 2-2h10a2 2 0 0 1 2 2v16z"/></svg><div class="t" style="left:807.65px;top:1122.96px;font-size:14.75px;line-height:14.75px;color:#0f172a;-webkit-text-stroke:0.3px currentColor;">Saved Prompts</div><svg class="ic" style="left:395.5px;top:1163.85px;width:13.8px;height:23.25px" viewBox="0 0 14 24" fill="none" stroke="#64748b" stroke-width="1.6" stroke-linecap="round"><path d="M12.5 5.5v12a5.5 5.5 0 0 1-11 0V6a4.5 4.5 0 0 1 9 0v11.5a3.5 3.5 0 0 1-7 0V6.5"/></svg><div class="b" style="left:1279.00px;top:1156.50px;width:37.25px;height:37.00px;background:#94b2f4;border-radius:50%;"></div><svg class="ic" style="left:1287.77px;top:1165.42px;width:19.46px;height:19.46px;" viewBox="0 0 24 24" fill="none" stroke="#fff" stroke-width="1.7" stroke-linecap="round" stroke-linejoin="round"><path d="m5 12 7-7 7 7"/><path d="M12 19V5"/></svg><div class="b" style="left:833.75px;top:1057.50px;width:36.50px;height:37.20px;background:#fff;border:1px solid #e3e5ea;border-radius:50%;box-shadow:0 1px 3px rgba(0,0,0,0.07);"></div><svg class="ic" style="left:840.56px;top:1064.51px;width:23.49px;height:23.49px;" viewBox="0 0 24 24" fill="none" stroke="#020617" stroke-width="2" stroke-linecap="round" stroke-linejoin="round"><path d="M12 5v14"/><path d="m19 12-7 7-7-7"/></svg><div class="t" style="left:11.80px;top:13.75px;font-size:31px;line-height:31px;color:#2f66e8;font-weight:700;letter-spacing:-1.0px;transform:scaleX(0.87);transform-origin:0 0;-webkit-text-stroke:0.5px currentColor;">Julius</div><svg class="ic" style="left:259.25px;top:15.62px;width:27.75px;height:27.75px;" viewBox="0 0 24 24" fill="none" stroke="#64748b" stroke-width="2.2" stroke-linecap="round" stroke-linejoin="round"><rect width="18" height="18" x="3" y="3" rx="2"/><path d="M9 3v18"/><path d="m16 15-3-3 3-3"/></svg><div class="b" style="left:12.00px;top:62.50px;width:279.50px;height:43.50px;background:#fff;border:1px solid #e6e6e6;border-radius:12px;"></div><svg class="ic" style="left:79.00px;top:72.55px;width:23.10px;height:23.10px;" viewBox="0 0 24 24" fill="none" stroke="#64748b" stroke-width="2" stroke-linecap="round" stroke-linejoin="round"><path d="M21 15a2 2 0 0 1-2 2H7l-4 4V5a2 2 0 0 1 2-2h14a2 2 0 0 1 2 2z"/><path d="M12 7v6"/><path d="M9 10h6"/></svg><div class="t" style="left:112.00px;top:75.38px;font-size:17.5px;line-height:17.5px;color:#64748b;">New Thread</div><svg class="ic" style="left:209.14px;top:76.24px;width:16.63px;height:16.63px;" viewBox="0 0 24 24" fill="none" stroke="#64748b" stroke-width="1.8" stroke-linecap="round" stroke-linejoin="round"><path d="M5 12h14"/><path d="m12 5 7 7-7 7"/></svg><svg class="ic" style="left:11.45px;top:126.95px;width:18.60px;height:18.60px;" viewBox="0 0 24 24" fill="none" stroke="#0b1220" stroke-width="2.3" stroke-linecap="round" stroke-linejoin="round"><rect width="7" height="9" x="3" y="3" rx="1"/><rect width="7" height="5" x="14" y="3" rx="1"/><rect width="7" height="9" x="14" y="12" rx="1"/><rect width="7" height="5" x="3" y="16" rx="1"/></svg><div class="t" style="left:40.00px;top:128.42px;font-size:16.8px;line-height:16.8px;color:#020617;font-weight:700;letter-spacing:-0.15px;">Workspace</div><div class="b" style="left:11.50px;top:155.25px;width:280.50px;height:1.00px;background:#e6e6e6;"></div><svg class="ic" style="left:18.73px;top:172.67px;width:18.30px;height:18.30px;" viewBox="0 0 24 24" fill="none" stroke="#64748b" stroke-width="2" stroke-linecap="round" stroke-linejoin="round"><path d="M21 15a2 2 0 0 1-2 2H7l-4 4V5a2 2 0 0 1 2-2h14a2 2 0 0 1 2 2z"/></svg><div class="t" style="left:51.75px;top:173.95px;font-size:15px;line-height:15px;color:#64748b;">My Threads (8)</div><svg class="ic" style="left:262.00px;top:171.85px;width:17.70px;height:17.70px;" viewBox="0 0 24 24" fill="none" stroke="#64748b" stroke-width="2.2" stroke-linecap="round" stroke-linejoin="round"><path d="m9 18 6-6-6-6"/></svg><svg class="ic" style="left:18.73px;top:209.78px;width:18.30px;height:18.30px;" viewBox="0 0 24 24" fill="none" stroke="#64748b" stroke-width="2" stroke-linecap="round" stroke-linejoin="round"><path d="M20 7h-3a2 2 0 0 1-2-2V2"/><path d="M9 18a2 2 0 0 1-2-2V4a2 2 0 0 1 2-2h7l4 4v10a2 2 0 0 1-2 2Z"/><path d="M3 7.6v12.8A1.6 1.6 0 0 0 4.6 22h9.8"/></svg><div class="t" style="left:51.75px;top:211.05px;font-size:15px;line-height:15px;color:#64748b;">My Files</div><svg class="ic" style="left:18.73px;top:247.17px;width:18.30px;height:18.30px;" viewBox="0 0 24 24" fill="none" stroke="#64748b" stroke-width="2" stroke-linecap="round" stroke-linejoin="round"><rect width="8" height="8" x="3" y="3" rx="2"/><path d="M7 11v4a2 2 0 0 0 2 2h4"/><rect width="8" height="8" x="13" y="13" rx="2"/></svg><div class="t" style="left:51.75px;top:248.45px;font-size:15px;line-height:15px;color:#64748b;">My Workflows</div><svg class="ic" style="left:11.53px;top:293.73px;width:18.24px;height:18.24px;" viewBox="0 0 24 24" fill="none" stroke="#0b1220" stroke-width="2.3" stroke-linecap="round" stroke-linejoin="round"><rect width="8" height="18" x="3" y="3" rx="1"/><path d="M7 3v18"/><path d="M20.4 18.9c.2.5-.1 1.1-.6 1.3l-1.9.7c-.5.2-1.1-.1-1.3-.6L11.1 5.1c-.2-.5.1-1.1.6-1.3l1.9-.7c.5-.2 1.1.1 1.3.6Z"/></svg><div class="t" style="left:40.00px;top:294.42px;font-size:16.8px;line-height:16.8px;color:#020617;font-weight:700;letter-spacing:-0.5px;">Resources</div><div class="b" style="left:11.50px;top:321.50px;width:280.50px;height:1.00px;background:#e6e6e6;"></div><svg class="ic" style="left:18.10px;top:338.35px;width:19.50px;height:19.50px;" viewBox="0 0 24 24" fill="none" stroke="#64748b" stroke-width="2" stroke-linecap="round" stroke-linejoin="round"><polyline points="22 7 13.5 15.5 8.5 10.5 2 17"/><polyline points="16 7 22 7 22 13"/></svg><div class="t" style="left:51.75px;top:340.35px;font-size:15px;line-height:15px;color:#64748b;">Explore Workflows</div><svg class="ic" style="left:18.10px;top:375.45px;width:19.50px;height:19.50px;" viewBox="0 0 24 24" fill="none" stroke="#64748b" stroke-width="2" stroke-linecap="round" stroke-linejoin="round"><path d="M2 3h6a4 4 0 0 1 4 4v14a3 3 0 0 0-3-3H2z"/><path d="M22 3h-6a4 4 0 0 0-4 4v14a3 3 0 0 1 3-3h7z"/></svg><div class="t" style="left:51.75px;top:377.45px;font-size:15px;line-height:15px;color:#64748b;">Documentation</div><svg class="ic" style="left:262.00px;top:375.35px;width:17.70px;height:17.70px;" viewBox="0 0 24 24" fill="none" stroke="#64748b" stroke-width="2.2" stroke-linecap="round" stroke-linejoin="round"><path d="m9 18 6-6-6-6"/></svg><svg class="ic" style="left:18.10px;top:412.65px;width:19.50px;height:19.50px;" viewBox="0 0 24 24" fill="none" stroke="#64748b" stroke-width="2" stroke-linecap="round" stroke-linejoin="round"><path d="M16 21v-2a4 4 0 0 0-4-4H6a4 4 0 0 0-4 4v2"/><circle cx="9" cy="7" r="4"/><path d="M22 21v-2a4 4 0 0 0-3-3.87"/><path d="M16 3.13a4 4 0 0 1 0 7.75"/></svg><div class="t" style="left:51.75px;top:414.65px;font-size:15px;line-height:15px;color:#64748b;">Community Forums</div><svg class="ic" style="left:18.10px;top:449.75px;width:19.50px;height:19.50px;" viewBox="0 0 24 24" fill="none" stroke="#64748b" stroke-width="2" stroke-linecap="round" stroke-linejoin="round"><path d="M10 2v7.527a2 2 0 0 1-.211.896L4.72 20.55a1 1 0 0 0 .9 1.45h12.76a1 1 0 0 0 .9-1.45l-5.069-10.127A2 2 0 0 1 14 9.527V2"/><path d="M8.5 2h7"/></svg><div class="t" style="left:51.75px;top:451.75px;font-size:15px;line-height:15px;color:#64748b;">Models Lab</div><div class="b" style="left:11.50px;top:1008.70px;width:280.50px;height:1.00px;background:#e6e6e6;"></div><svg class="ic" style="left:25.13px;top:1030.36px;width:19.53px;height:19.53px;" viewBox="0 0 24 24" fill="none" stroke="#64748b" stroke-width="2" stroke-linecap="round" stroke-linejoin="round"><path d="M12.22 2h-.44a2 2 0 0 0-2 2v.18a2 2 0 0 1-1 1.73l-.43.25a2 2 0 0 1-2 0l-.15-.08a2 2 0 0 0-2.73.73l-.22.38a2 2 0 0 0 .73 2.73l.15.1a2 2 0 0 1 1 1.72v.51a2 2 0 0 1-1 1.74l-.15.09a2 2 0 0 0-.73 2.73l.22.38a2 2 0 0 0 2.73.73l.15-.08a2 2 0 0 1 2 0l.43.25a2 2 0 0 1 1 1.73V20a2 2 0 0 0 2 2h.44a2 2 0 0 0 2-2v-.18a2 2 0 0 1 1-1.73l.43-.25a2 2 0 0 1 2 0l.15.08a2 2 0 0 0 2.73-.73l.22-.39a2 2 0 0 0-.73-2.73l-.15-.08a2 2 0 0 1-1-1.74v-.5a2 2 0 0 1 1-1.74l.15-.09a2 2 0 0 0 .73-2.73l-.22-.38a2 2 0 0 0-2.73-.73l-.15.08a2 2 0 0 1-2 0l-.43-.25a2 2 0 0 1-1-1.73V4a2 2 0 0 0-2-2z"/><circle cx="12" cy="12" r="3"/></svg><div class="t" style="left:53.75px;top:1032.67px;font-size:14.5px;line-height:14.5px;color:#64748b;font-weight:700;letter-spacing:-0.45px;">Account &amp; Billing</div><svg class="ic" style="left:25.36px;top:1062.96px;width:19.08px;height:19.08px;" viewBox="0 0 24 24" fill="none" stroke="#64748b" stroke-width="2" stroke-linecap="round" stroke-linejoin="round"><path d="M9 21H5a2 2 0 0 1-2-2V5a2 2 0 0 1 2-2h4"/><polyline points="16 17 21 12 16 7"/><line x1="21" x2="9" y1="12" y2="12"/></svg><div class="t" style="left:53.75px;top:1065.17px;font-size:14.5px;line-height:14.5px;color:#64748b;font-weight:700;letter-spacing:-0.45px;">Log Out</div><div class="b" style="left:25.50px;top:1114.50px;width:27.80px;height:28.00px;background:#0a87d9;border-radius:50%;"></div><div class="t" style="left:-260.60px;width:600px;text-align:center;top:1121.17px;font-size:14.5px;line-height:14.5px;color:#fff;">P</div><div class="t" style="left:63.40px;top:1106.20px;font-size:17px;line-height:17px;color:#020617;font-weight:700;letter-spacing:-0.4px;">Preston Attebery</div><div class="t" style="left:63.40px;top:1129.75px;font-size:15px;line-height:15px;color:#64748b;letter-spacing:-0.1px;">Google &#8226; preston@julius.ai</div><div class="b" style="left:11.50px;top:1168.00px;width:280.50px;height:1.00px;background:#e6e6e6;"></div><svg class="ic" style="left:18.5px;top:1188.5px;width:18.5px;height:21.5px" viewBox="1.5 0 21 26.5" fill="#9aa4b2"><path d="M12.2 8.2c-1 0-2.5-1.2-4.1-1.1-2.1 0-4 1.2-5.1 3.1-2.2 3.8-.6 9.4 1.6 12.5 1 1.5 2.3 3.2 3.9 3.1 1.6-.1 2.2-1 4.1-1 1.9 0 2.4 1 4.1 1 1.7 0 2.8-1.5 3.8-3 1.2-1.7 1.7-3.4 1.7-3.5 0 0-3.3-1.3-3.3-5 0-3.1 2.6-4.6 2.7-4.7-1.5-2.2-3.8-2.4-4.5-2.5-2.1-.2-3.8 1.1-4.8 1.1zM15.7 5c.9-1 1.4-2.5 1.3-4-1.2.1-2.8.8-3.7 1.9-.8.9-1.5 2.4-1.3 3.9 1.4.1 2.8-.7 3.7-1.8z"/></svg><svg class="ic" style="left:53.5px;top:1189.5px;width:23.4px;height:16px" viewBox="0 0 32 22" fill="#9aa4b2"><path d="M0 21.5C.6 14.5 5.5 9 16 9s15.4 5.5 16 12.5z"/><path d="M8.5 4.5l3 5M23.5 4.5l-3 5" stroke="#9aa4b2" stroke-width="1.6" stroke-linecap="round"/><circle cx="9.5" cy="16" r="1.5" fill="#f5f5f5"/><circle cx="22.5" cy="16" r="1.5" fill="#f5f5f5"/></svg><svg class="ic" style="left:226.5px;top:1190px;width:23.5px;height:18px" viewBox="0 0 127 96" fill="#9aa4b2"><path d="M107.7 8.1A105 105 0 0 0 81.5 0a72 72 0 0 0-3.4 6.8 97.7 97.7 0 0 0-29.1 0A72 72 0 0 0 45.6 0a105.9 105.9 0 0 0-26.3 8.1C2.8 32.7-1.7 56.6.5 80.2a105.7 105.7 0 0 0 32.2 16.2 77.7 77.7 0 0 0 6.9-11.1 68.4 68.4 0 0 1-10.9-5.2c.9-.7 1.8-1.4 2.6-2.1a75.6 75.6 0 0 0 64.3 0c.9.7 1.7 1.4 2.6 2.1a68.7 68.7 0 0 1-10.9 5.2 77 77 0 0 0 6.9 11.1 105.3 105.3 0 0 0 32.2-16.2c2.6-27.4-4.5-51.1-18.7-72.1zM42.5 65.7c-6.3 0-11.4-5.7-11.4-12.8s5-12.8 11.4-12.8 11.5 5.8 11.4 12.8-5 12.8-11.4 12.8zm42.2 0c-6.3 0-11.4-5.7-11.4-12.8s5-12.8 11.4-12.8 11.5 5.8 11.4 12.8-5 12.8-11.4 12.8z"/></svg><svg class="ic" style="left:266.3px;top:1191px;width:18.3px;height:16.5px" viewBox="0 0 24 22" fill="none" stroke="#9aa4b2" stroke-width="2.2"><path d="M2 1h5.5l14.5 20h-5.5z" stroke-linejoin="round"/><path d="M21 1L13.5 9.5M3 21l7.5-8.5" stroke-linecap="round"/></svg><div class="b" style="left:306.50px;top:11.40px;width:51.90px;height:40.90px;background:#fff;border:1px solid #e8e8e8;border-radius:12px;"></div><svg class="ic" style="left:320.27px;top:20.07px;width:23.76px;height:23.76px;" viewBox="0 0 24 24" fill="none" stroke="#64748b" stroke-width="2.1" stroke-linecap="round" stroke-linejoin="round"><path d="M20 7h-3a2 2 0 0 1-2-2V2"/><path d="M9 18a2 2 0 0 1-2-2V4a2 2 0 0 1 2-2h7l4 4v10a2 2 0 0 1-2 2Z"/><path d="M3 7.6v12.8A1.6 1.6 0 0 0 4.6 22h9.8"/></svg><div class="b" style="left:369.00px;top:11.40px;width:171.00px;height:40.90px;background:#fff;border:1px solid #e8e8e8;border-radius:12px;"></div><svg class="ic" style="left:383.74px;top:22.44px;width:18.76px;height:18.76px;" viewBox="0 0 24 24" fill="none" stroke="#3cb35b" stroke-width="2" stroke-linecap="round" stroke-linejoin="round"><rect width="20" height="8" x="2" y="2" rx="2" ry="2"/><rect width="20" height="8" x="2" y="14" rx="2" ry="2"/><line x1="6" x2="6.01" y1="6" y2="6"/><line x1="6" x2="6.01" y1="18" y2="18"/></svg><div class="t" style="left:413.50px;top:23.05px;font-size:18px;line-height:18px;color:#3cb35b;letter-spacing:-0.45px;-webkit-text-stroke:0.15px currentColor;">Connected</div><div class="b" style="left:507.85px;top:24.90px;width:3.75px;height:13.85px;background:#3cb35b;"></div><div class="b" style="left:512.60px;top:24.90px;width:3.90px;height:13.85px;background:#3cb35b;"></div><div class="b" style="left:517.40px;top:24.90px;width:3.80px;height:13.85px;background:#ececf3;"></div><div class="b" style="left:521.90px;top:24.90px;width:3.60px;height:13.85px;background:#ececf3;"></div><div class="t" style="left:611.50px;top:21.50px;font-size:20px;line-height:20px;color:#020617;letter-spacing:-0.25px;-webkit-text-stroke:0.25px currentColor;">UFO Sightings Data Summary</div><div class="b" style="left:945.50px;top:11.40px;width:51.80px;height:40.90px;background:#fff;border:1px solid #e8e8e8;border-radius:12px;"></div><div class="b" style="left:963.00px;top:29.65px;width:4.40px;height:4.40px;background:#64748b;border-radius:50%;"></div><div class="b" style="left:969.45px;top:29.65px;width:4.40px;height:4.40px;background:#64748b;border-radius:50%;"></div><div class="b" style="left:975.90px;top:29.65px;width:4.40px;height:4.40px;background:#64748b;border-radius:50%;"></div><div class="b" style="left:1008.00px;top:11.40px;width:138.75px;height:40.90px;background:#fff;border:1px solid #e8e8e8;border-radius:12px;"></div><svg class="ic" style="left:1024.5px;top:22.9px;width:16.2px;height:16.3px" viewBox="0 0 16 16"><path fill="#2f7fd0" d="M7.9 0C4 0 4.2 1.7 4.2 1.7v1.8h3.8V4H2.7S0 3.7 0 7.9c0 4.2 2.3 4 2.3 4h1.4V10s-.1-2.3 2.3-2.3h3.8s2.2 0 2.2-2.1V2.1S12.3 0 7.9 0zM5.8 1.2c.4 0 .7.3.7.7s-.3.7-.7.7-.7-.3-.7-.7.3-.7.7-.7z"/><path fill="#f7c929" d="M8.1 16c3.9 0 3.7-1.7 3.7-1.7v-1.8H8V12h5.3s2.7.3 2.7-3.9c0-4.2-2.3-4-2.3-4h-1.4V6s.1 2.3-2.3 2.3H6.2S4 8.3 4 10.4v3.5S3.7 16 8.1 16zm2.1-1.2c-.4 0-.7-.3-.7-.7s.3-.7.7-.7.7.3.7.7-.3.7-.7.7z"/></svg><div class="t" style="left:1051.30px;top:23.21px;font-size:17.4px;line-height:17.4px;color:#64748b;letter-spacing:-0.05px;">Python</div><svg class="ic" style="left:1118px;top:28.6px;width:11px;height:7.3px" viewBox="5 8 14 7.5" fill="none" stroke="#a3acb9" stroke-width="2" stroke-linecap="round" stroke-linejoin="round"><path d="m6 9 6 6 6-6"/></svg><div class="b" style="left:1157.50px;top:11.40px;width:52.15px;height:40.90px;background:#fff;border:1px solid #e8e8e8;border-radius:12px;"></div><svg class="ic" style="left:1171.52px;top:19.72px;width:24.36px;height:24.36px;" viewBox="0 0 24 24" fill="none" stroke="#64748b" stroke-width="2.2" stroke-linecap="round" stroke-linejoin="round"><path d="M12.22 2h-.44a2 2 0 0 0-2 2v.18a2 2 0 0 1-1 1.73l-.43.25a2 2 0 0 1-2 0l-.15-.08a2 2 0 0 0-2.73.73l-.22.38a2 2 0 0 0 .73 2.73l.15.1a2 2 0 0 1 1 1.72v.51a2 2 0 0 1-1 1.74l-.15.09a2 2 0 0 0-.73 2.73l.22.38a2 2 0 0 0 2.73.73l.15-.08a2 2 0 0 1 2 0l.43.25a2 2 0 0 1 1 1.73V20a2 2 0 0 0 2 2h.44a2 2 0 0 0 2-2v-.18a2 2 0 0 1 1-1.73l.43-.25a2 2 0 0 1 2 0l.15.08a2 2 0 0 0 2.73-.73l.22-.39a2 2 0 0 0-.73-2.73l-.15-.08a2 2 0 0 1-1-1.74v-.5a2 2 0 0 1 1-1.74l.15-.09a2 2 0 0 0 .73-2.73l-.22-.38a2 2 0 0 0-2.73-.73l-.15.08a2 2 0 0 1-2 0l-.43-.25a2 2 0 0 1-1-1.73V4a2 2 0 0 0-2-2z"/><circle cx="12" cy="12" r="3"/></svg><div class="b" style="left:1220.50px;top:11.40px;width:51.50px;height:40.90px;background:#fff;border:1px solid #e8e8e8;border-radius:12px;"></div><svg class="ic" style="left:1233.71px;top:19.66px;width:25.57px;height:25.57px;" viewBox="0 0 24 24" fill="none" stroke="#64748b" stroke-width="2.2" stroke-linecap="round" stroke-linejoin="round"><path d="m3 11 18-5v12L3 14v-3z"/><path d="M11.6 16.8a3 3 0 1 1-5.8-1.6"/></svg><div class="b" style="left:1283.00px;top:11.40px;width:52.00px;height:40.90px;background:#fff;border:1px solid #e8e8e8;border-radius:12px;"></div><svg class="ic" style="left:1296.81px;top:20.36px;width:24.18px;height:24.18px;" viewBox="0 0 24 24" fill="none" stroke="#64748b" stroke-width="2.2" stroke-linecap="round" stroke-linejoin="round"><path d="M7.9 20A9 9 0 1 0 4 16.1L2 22Z"/><path d="M9.09 9a3 3 0 0 1 5.83 1c0 2-3 3-3 3"/><path d="M12 17h.01"/></svg><div class="b" style="left:1346.00px;top:11.40px;width:52.00px;height:40.90px;background:#fff;border:1px solid #e8e8e8;border-radius:12px;"></div><svg class="ic" style="left:1360.42px;top:20.32px;width:23.16px;height:23.16px;" viewBox="0 0 24 24" fill="none" stroke="#64748b" stroke-width="2.2" stroke-linecap="round" stroke-linejoin="round"><rect width="18" height="18" x="3" y="3" rx="2"/><path d="M15 3v18"/><path d="m8 9 3 3-3 3"/></svg><div class="t" style="left:1520.50px;top:22.20px;font-size:19px;line-height:19px;color:#020617;font-weight:700;letter-spacing:-0.2px;">Julius' Workspace</div><div class="t" style="left:1444.50px;top:81.40px;font-size:17px;line-height:17px;color:#020617;">Outline</div><div class="t" style="left:1575.00px;top:81.40px;font-size:17px;line-height:17px;color:#64748b;">Notes</div><div class="t" style="left:1688.00px;top:81.40px;font-size:17px;line-height:17px;color:#64748b;">Reasoning</div><div style="position:absolute;left:1400px;top:100px;width:390.7px;height:330px;overflow:hidden"><div class="b" style="left:13.00px;top:15.60px;width:27.30px;height:27.40px;border:1px solid #e7e7ea;border-radius:50%;"></div><div class="t" style="left:-273.35px;width:600px;text-align:center;top:22.60px;font-size:14px;line-height:14px;color:#64748b;">J</div><div class="t" style="left:50.40px;top:20.81px;font-size:17.4px;line-height:17.4px;color:#0f172a;">Total UFO Sightings Count: 80332</div><svg class="ic" style="left:49.06px;top:54.23px;width:15.43px;height:15.43px;" viewBox="0 0 24 24" fill="none" stroke="#64748b" stroke-width="1.8" stroke-linecap="round" stroke-linejoin="round"><path d="M3 3v18h18"/><path d="m19 9-5 5-4-4-3 3"/></svg><div class="t" style="left:73.65px;top:53.21px;font-size:17.4px;line-height:17.4px;color:#0f172a;">Total Number of UFO Sightings: 80332</div><div class="b" style="left:13.00px;top:89.70px;width:27.30px;height:27.40px;border:1px solid #e7e7ea;border-radius:50%;"></div><svg class="ic" style="left:19.62px;top:96.57px;width:14.07px;height:14.07px;" viewBox="0 0 24 24" fill="none" stroke="#64748b" stroke-width="2" stroke-linecap="round" stroke-linejoin="round"><path d="M19 21v-2a4 4 0 0 0-4-4H9a4 4 0 0 0-4 4v2"/><circle cx="12" cy="7" r="4"/></svg><div class="t" style="left:50.40px;top:94.91px;font-size:17.4px;line-height:17.4px;color:#0f172a;">Total Number of UFO Sightings: 80332</div><div class="b" style="left:13.00px;top:131.90px;width:27.30px;height:27.40px;border:1px solid #e7e7ea;border-radius:50%;"></div><div class="t" style="left:-273.35px;width:600px;text-align:center;top:138.90px;font-size:14px;line-height:14px;color:#64748b;">J</div><div class="t" style="left:50.40px;top:137.11px;font-size:17.4px;line-height:17.4px;color:#0f172a;">Error Encountered While Analyzing UFO Data Report</div><svg class="ic" style="left:49.06px;top:170.48px;width:15.43px;height:15.43px;" viewBox="0 0 24 24" fill="none" stroke="#64748b" stroke-width="1.8" stroke-linecap="round" stroke-linejoin="round"><path d="M3 3v18h18"/><path d="m19 9-5 5-4-4-3 3"/></svg><div class="t" style="left:73.65px;top:169.46px;font-size:17.4px;line-height:17.4px;color:#0f172a;letter-spacing:-0.32px;">Datetime Format Issue in UFO Data Rep...</div><svg class="ic" style="left:49.06px;top:202.98px;width:15.43px;height:15.43px;" viewBox="0 0 24 24" fill="none" stroke="#64748b" stroke-width="1.8" stroke-linecap="round" stroke-linejoin="round"><path d="M3 3v18h18"/><path d="m19 9-5 5-4-4-3 3"/></svg><div class="t" style="left:73.65px;top:201.96px;font-size:17.4px;line-height:17.4px;color:#0f172a;letter-spacing:-0.21px;">Datetime Issue Resolved; Report Gener...</div><div class="b" style="left:13.00px;top:239.00px;width:27.30px;height:27.40px;border:1px solid #e7e7ea;border-radius:50%;"></div><svg class="ic" style="left:19.62px;top:245.87px;width:14.07px;height:14.07px;" viewBox="0 0 24 24" fill="none" stroke="#64748b" stroke-width="2" stroke-linecap="round" stroke-linejoin="round"><path d="M19 21v-2a4 4 0 0 0-4-4H9a4 4 0 0 0-4 4v2"/><circle cx="12" cy="7" r="4"/></svg><div class="t" style="left:50.40px;top:244.21px;font-size:17.4px;line-height:17.4px;color:#0f172a;">Data Cleaning and Basic Statistics Generated</div><div class="b" style="left:13.00px;top:280.75px;width:27.30px;height:27.40px;border:1px solid #e7e7ea;border-radius:50%;"></div><div class="t" style="left:-273.35px;width:600px;text-align:center;top:287.75px;font-size:14px;line-height:14px;color:#64748b;">J</div><div class="t" style="left:50.40px;top:285.96px;font-size:17.4px;line-height:17.4px;color:#0f172a;">Generated Visualizations of UFO Sightings Data</div></div></div></body></html>
